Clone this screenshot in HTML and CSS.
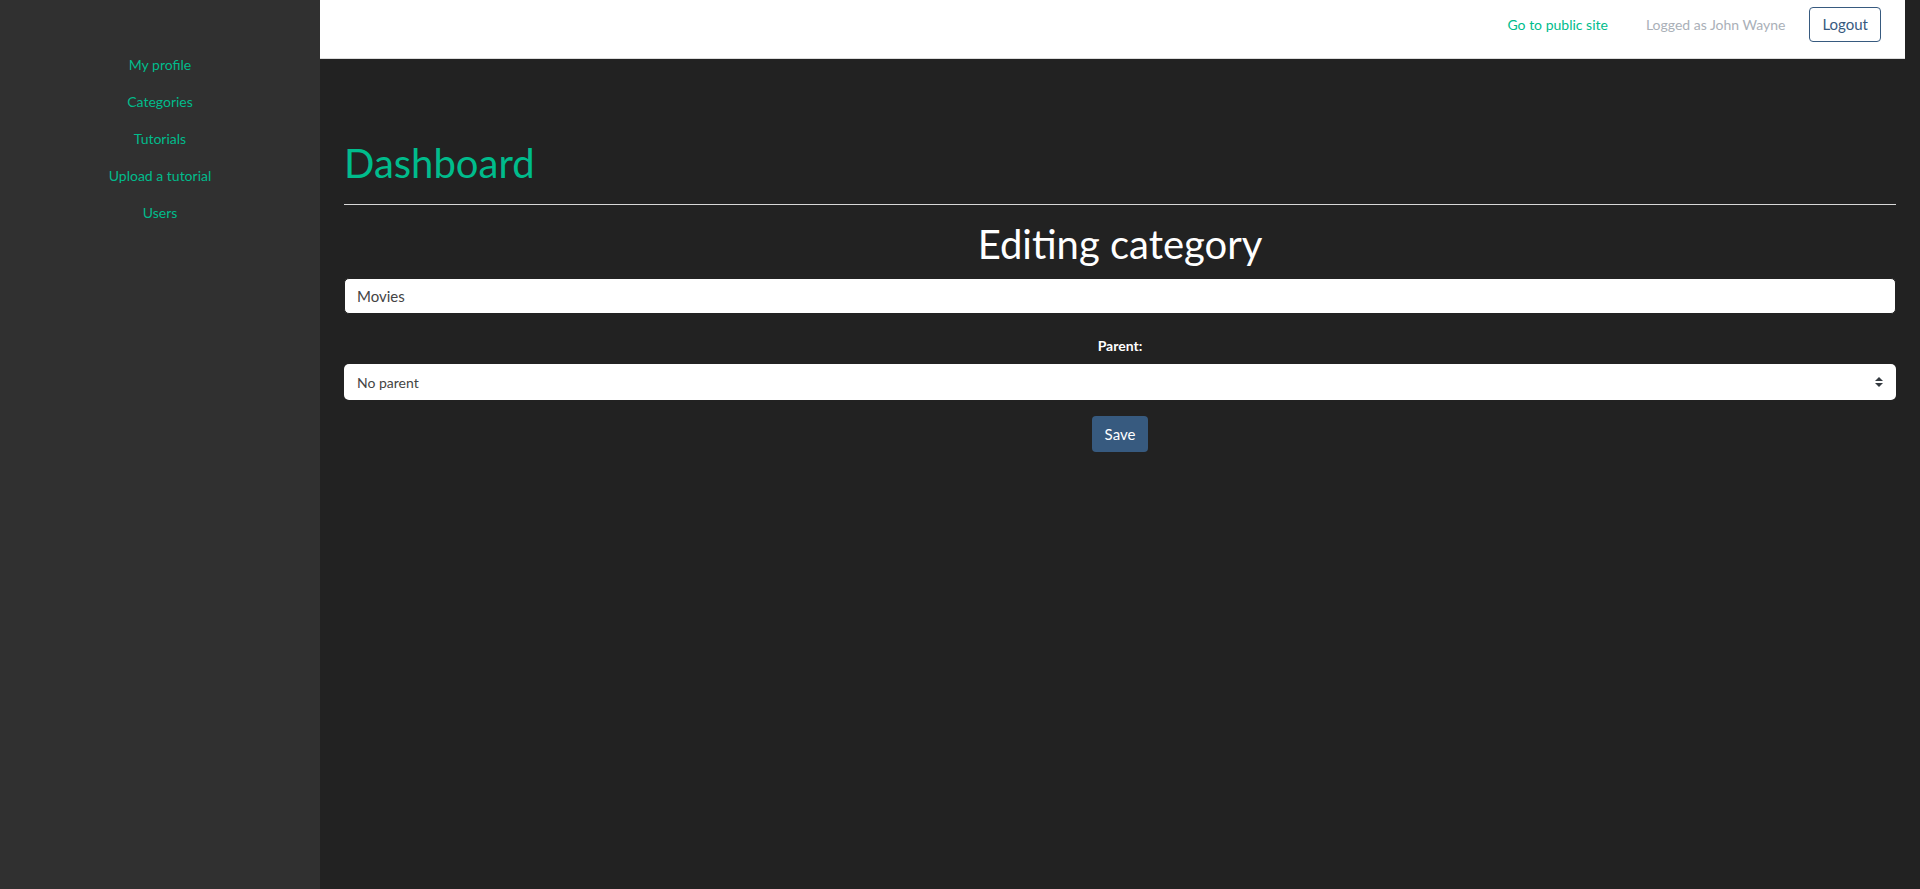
FILE: index.html
```html
<!DOCTYPE html>
<html lang="en">
<head>
<meta charset="utf-8">
<title>Dashboard - Editing category</title>
<link rel="stylesheet" href="styles.css">
</head>
<body>
<div class="layout">
  <aside class="sidebar">
    <nav class="side-nav">
      <a href="#" class="side-link">My profile</a>
      <a href="#" class="side-link">Categories</a>
      <a href="#" class="side-link">Tutorials</a>
      <a href="#" class="side-link">Upload a tutorial</a>
      <a href="#" class="side-link">Users</a>
    </nav>
  </aside>
  <main class="main">
    <header class="topbar">
      <a href="#" class="public-link">Go to public site</a>
      <span class="logged">Logged as John Wayne</span>
      <button class="btn-logout" type="button">Logout</button>
    </header>
    <section class="content">
      <h1 class="page-title">Dashboard</h1>
      <hr class="divider">
      <h2 class="form-title">Editing category</h2>
      <form class="cat-form">
        <input class="text-input" type="text" value="Movies">
        <label class="field-label">Parent:</label>
        <div class="select-wrap">
          <select class="select-input">
            <option>No parent</option>
          </select>
          <svg class="select-arrow" width="8" height="10" viewBox="0 0 8 10" aria-hidden="true">
            <path d="M4 0 L8 4 H0 Z M0 6 H8 L4 10 Z" fill="#343a40"/>
          </svg>
        </div>
        <button class="btn-save" type="button">Save</button>
      </form>
    </section>
  </main>
</div>
</body>
</html>
```
FILE: styles.css
```css
html, body {
  margin: 0;
  padding: 0;
}
body {
  background: #222222;
  font-family: Lato, "Noto Sans", "Liberation Sans", sans-serif;
  font-size: 15px;
  color: #ffffff;
}
.layout {
  display: flex;
  min-height: 889px;
}
.sidebar {
  width: 320px;
  flex: 0 0 320px;
  background: #303030;
}
.side-nav {
  display: flex;
  flex-direction: column;
  align-items: center;
  padding-top: 46px;
}
.side-link {
  display: block;
  height: 37px;
  line-height: 37px;
  font-size: 14px;
  color: #00bc8c;
  text-decoration: none;
}
.main {
  flex: 1;
  min-width: 0;
}
.topbar {
  margin-right: 15px;
  height: 51px;
  padding: 7px 24px 0 0;
  background: #ffffff;
  border-bottom: 1px solid #dcdcdc;
  display: flex;
  justify-content: flex-end;
  align-items: flex-start;
}
.public-link,
.logged {
  display: block;
  height: 35px;
  line-height: 35px;
  font-size: 14px;
  text-decoration: none;
}
.public-link {
  color: #00bc8c;
  margin-right: 38px;
}
.logged {
  color: #aab0b8;
  margin-right: 24px;
}
.btn-logout {
  height: 35px;
  padding: 0 12px;
  background: #ffffff;
  border: 1px solid #375a7f;
  border-radius: 4px;
  color: #375a7f;
  font-family: Lato, "Noto Sans", "Liberation Sans", sans-serif;
  font-size: 15px;
  line-height: 33px;
}
.content {
  padding: 0 24px;
}
.page-title {
  margin: 80px 0 0;
  font-size: 40px;
  line-height: 48px;
  font-weight: 400;
  color: #00bc8c;
}
.divider {
  margin: 17px 0 0;
  border: 0;
  border-top: 1px solid #d8d8d8;
  height: 0;
}
.form-title {
  margin: 15px 0 0;
  font-size: 40px;
  line-height: 48px;
  font-weight: 400;
  color: #ffffff;
  text-align: center;
}
.cat-form {
  display: flex;
  flex-direction: column;
}
.text-input {
  box-sizing: border-box;
  width: 100%;
  height: 36.5px;
  margin-top: 9.5px;
  padding: 0 12px;
  border: 1px solid #222222;
  border-radius: 5px;
  background: #ffffff;
  color: #444444;
  font-family: Lato, "Noto Sans", "Liberation Sans", sans-serif;
  font-size: 15px;
  outline: none;
}
.field-label {
  display: block;
  margin-top: 21px;
  font-size: 14px;
  line-height: 21px;
  font-weight: 700;
  color: #ffffff;
  text-align: center;
}
.select-wrap {
  position: relative;
  margin-top: 8px;
}
.select-input {
  box-sizing: border-box;
  display: block;
  width: 100%;
  height: 36px;
  padding: 0 28px 0 13px;
  border: 0;
  border-radius: 5px;
  background: #ffffff;
  color: #444444;
  font-family: Lato, "Noto Sans", "Liberation Sans", sans-serif;
  font-size: 14px;
  -webkit-appearance: none;
  appearance: none;
  outline: none;
}
.select-arrow {
  position: absolute;
  right: 13px;
  top: 13px;
}
.btn-save {
  align-self: center;
  margin-top: 16px;
  width: 56px;
  height: 36px;
  padding: 0;
  background: #375a7f;
  border: 0;
  border-radius: 4px;
  color: #ffffff;
  font-family: Lato, "Noto Sans", "Liberation Sans", sans-serif;
  font-size: 15px;
}
```
